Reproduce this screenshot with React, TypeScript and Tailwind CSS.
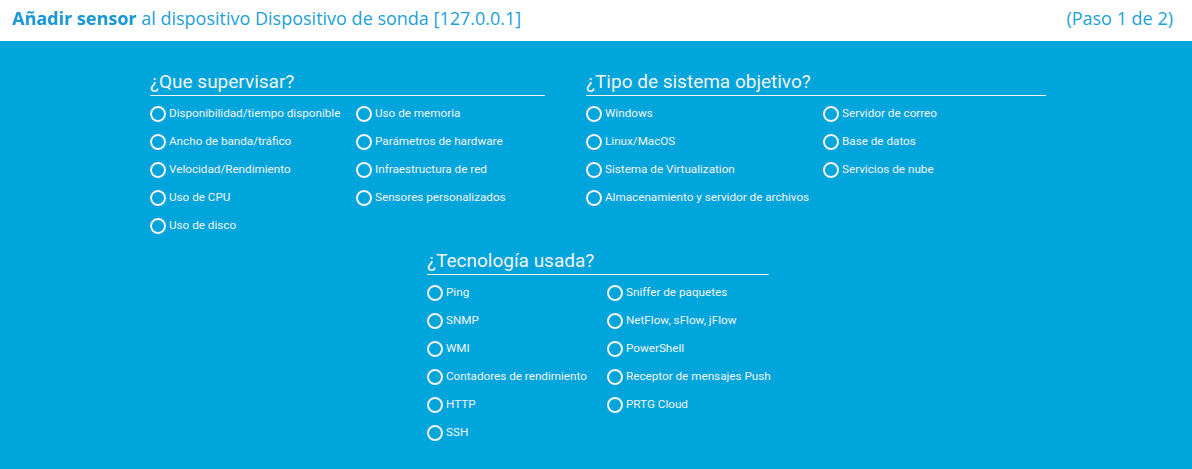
import * as React from "react";

type Section = {
  title: string;
  width: string;
  colWidth: string;
  columns: string[][];
};

const supervisar: Section = {
  title: "¿Que supervisar?",
  width: "w-[395px]",
  colWidth: "w-[206px]",
  columns: [
    ["Disponibilidad/tiempo disponible", "Ancho de banda/tráfico", "Velocidad/Rendimiento", "Uso de CPU", "Uso de disco"],
    ["Uso de memoria", "Parámetros de hardware", "Infraestructura de red", "Sensores personalizados"],
  ],
};

const sistema: Section = {
  title: "¿Tipo de sistema objetivo?",
  width: "w-[460px]",
  colWidth: "w-[237px]",
  columns: [
    ["Windows", "Linux/MacOS", "Sistema de Virtualization", "Almacenamiento y servidor de archivos"],
    ["Servidor de correo", "Base de datos", "Servicios de nube"],
  ],
};

const tecnologia: Section = {
  title: "¿Tecnología usada?",
  width: "w-[342px]",
  colWidth: "w-[180px]",
  columns: [
    ["Ping", "SNMP", "WMI", "Contadores de rendimiento", "HTTP", "SSH"],
    ["Sniffer de paquetes", "NetFlow, sFlow, jFlow", "PowerShell", "Receptor de mensajes Push", "PRTG Cloud"],
  ],
};

function Radio({ label }: { label: string }) {
  return (
    <label className="flex items-center h-[28px] cursor-pointer">
      <span className="w-[16px] h-[16px] rounded-full border-2 border-[#f2f2f2] shrink-0" />
      <span className="ml-[3px] text-[11.7px] text-[#f4f4f4] whitespace-nowrap">{label}</span>
    </label>
  );
}

function Group({ section }: { section: Section }) {
  return (
    <div className={section.width}>
      <h2 className="text-[19px] leading-[22px] text-[#f2f2f2] border-b border-[#f2f2f2] pb-[2px] mb-[4px]">
        {section.title}
      </h2>
      <div className="flex">
        {section.columns.map((col, i) => (
          <div key={i} className={i === 0 ? section.colWidth + " shrink-0" : "flex-1"}>
            {col.map((item) => (
              <Radio key={item} label={item} />
            ))}
          </div>
        ))}
      </div>
    </div>
  );
}

export default function App() {
  return (
    <div className="w-[1192px] h-[469px] bg-[#00a5db] font-['Roboto',sans-serif] overflow-hidden">
      {/* Header */}
      <div className="h-[41px] bg-white flex items-center justify-between px-[12px] pb-[5px] font-['Open_Sans',sans-serif] text-[18px] text-[#1ca1d8]">
        <div>
          <span className="font-bold text-[#1898d2]">Añadir sensor</span> al dispositivo{" "}
          <span>Dispositivo de sonda [127.0.0.1]</span>
        </div>
        <div className="mr-[7px]">(Paso 1 de 2)</div>
      </div>

      {/* Content */}
      <div className="flex flex-col items-center pt-[30px] pl-[4px]">
        <div className="flex gap-[41px]">
          <Group section={supervisar} />
          <Group section={sistema} />
        </div>
        <div className="mt-[10px]">
          <Group section={tecnologia} />
        </div>
      </div>
    </div>
  );
}
